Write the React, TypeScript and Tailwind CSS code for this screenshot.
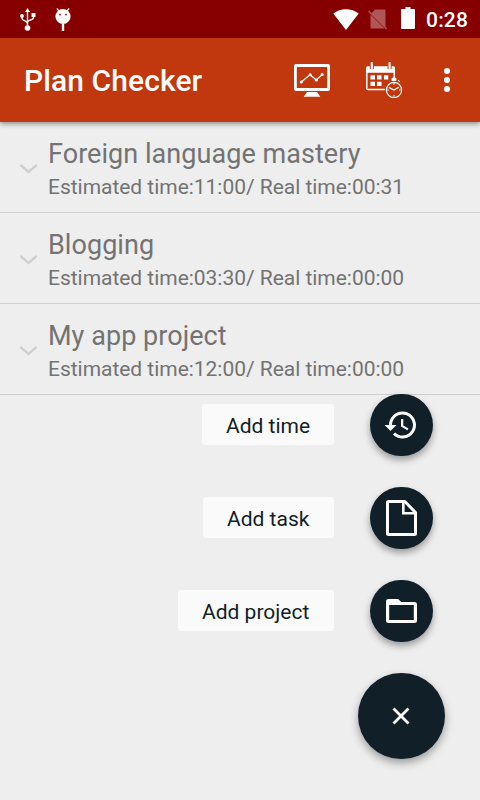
import React from 'react';

interface Project {
  name: string;
  estimated: string;
  real: string;
}

const projects: Project[] = [
  { name: 'Foreign language mastery', estimated: '11:00', real: '00:31' },
  { name: 'Blogging', estimated: '03:30', real: '00:00' },
  { name: 'My app project', estimated: '12:00', real: '00:00' },
];

const UsbIcon = () => (
  <svg className="w-4 h-[23px]" viewBox="0 0 16 23" fill="none" stroke="#fff" strokeWidth="1.4">
    <path d="M7.5 3v17M2 7v3.5c0 2 5.5 2.5 5.5 5M13.5 7v3c0 2-6 2-6 4" />
    <path d="M7.5 0L10 4H5z" fill="#fff" stroke="none" />
    <circle cx="7.5" cy="20" r="2.8" fill="#fff" stroke="none" />
    <circle cx="2" cy="8" r="1.9" fill="#fff" stroke="none" />
    <path d="M11.5 5h4v4h-4z" fill="#fff" stroke="none" />
  </svg>
);

const DebugIcon = () => (
  <svg className="w-4 h-[24px]" viewBox="0 0 16 24" fill="none">
    <path d="M1.8 1.5L4.5 4.500M14.200 1.500L11.500 4.500" stroke="#fff" strokeWidth="1.2" />
    <circle cx="8" cy="9.5" r="7.6" fill="#fff" />
    <path d="M6.8 17h2.400v7H6.800z" fill="#fff" />
    <circle cx="5" cy="7.6" r=".9" fill="#860000" />
    <circle cx="11" cy="7.6" r=".9" fill="#860000" />
  </svg>
);

const WifiIcon = () => (
  <svg className="w-[26px] h-[21px]" viewBox="0 0 26 21" fill="#fff">
    <path d="M13 21L.3 4.5C7.5-1.2 18.5-1.2 25.7 4.5z" />
  </svg>
);

const NoSimIcon = () => (
  <svg className="w-5 h-[21px]" viewBox="0 0 20 21">
    <path d="M7 .5h9.500a1 1 0 0 1 1 1v16.500L3.700 4.200zM2.500 5.500l14 14H3.500a1 1 0 0 1-1-1z" fill="#fff" fillOpacity=".34" />
    <path d="M.6 2l18 18" stroke="#fff" strokeOpacity=".32" strokeWidth="1.6" />
  </svg>
);

const BatteryIcon = () => (
  <svg className="w-[14px] h-[22px]" viewBox="0 0 14 22" fill="#fff">
    <path d="M4.5 0h5v2H13q1 0 1 1v18q0 1-1 1H1q-1 0-1-1V3q0-1 1-1h3.5z" />
  </svg>
);

const MonitorIcon = () => (
  <svg className="w-9 h-[33px]" viewBox="0 0 36 33" fill="none" stroke="#fff">
    <path fill="#fff" stroke="none" fillRule="evenodd" d="M2 0h32a2 2 0 0 1 2 2v23a2 2 0 0 1-2 2H2a2 2 0 0 1-2-2V2a2 2 0 0 1 2-2zM2.8 3v21h30.400V3z" />
    <path fill="#fff" stroke="none" d="M13 28h10l3.300 4.700H9.700z" />
    <path d="M7.300 18l8.700-7.200 6.300 5.200 6-5.500" strokeWidth="1.1" />
    <g fill="#fff" stroke="none">
      <circle cx="7.3" cy="18" r="1.6" />
      <circle cx="16.2" cy="10.8" r="1.5" />
      <circle cx="22.3" cy="16" r="1.6" />
      <circle cx="28.2" cy="10.5" r="1.5" />
    </g>
  </svg>
);

const CalendarIcon = () => (
  <svg className="w-[37px] h-9" viewBox="0 0 37 36" fill="none" stroke="#fff">
    <path d="M28.300 17V6.500q0-1.300-1.300-1.300h-25Q.8 5.200.8 6.500v19.700q0 1.300 1.300 1.300H19" strokeWidth="1.5" />
    <path d="M.2 10.800V5.500q0-1 1-1h26.700q1 0 1 1v5.300z" fill="#fff" stroke="none" />
    <path d="M5.800 0v7M23.600 0v7" stroke="#c1370e" strokeWidth="4" />
    <path d="M5.800 1v5.200M23.600 1v5.200" strokeWidth="2.2" strokeLinecap="round" />
    <path d="M4.500 13.300h4.500v4.200H4.500zM11 13.300h4.500v4.200H11zM18 13.300h4.300v4.200H18zM4.500 19.800h4.500V24H4.500zM11 19.800h4.500V24H11z" fill="#fff" stroke="none" />
    <circle cx="28" cy="28" r="9" fill="#c1370e" stroke="none" />
    <circle cx="28" cy="28" r="7.6" strokeWidth="1.2" />
    <path d="M26 16.500q2-1.500 4 0v2h-4zM32 18.300l2 1.500" fill="#fff" strokeWidth="1" />
    <path d="M22.800 25.300l5.200 2.700 4.800-2.700" strokeWidth="1.3" />
    <path d="M28 21v1.800M28 33v1.800M21.300 28h1.500M33.100 28h1.500" strokeWidth="1" />
  </svg>
);

const HistoryIcon = () => (
  <svg className="w-9 h-9" viewBox="0 0 24 24" fill="#fff">
    <path d="M13 3c-4.970 0-9 4.030-9 9H1l3.890 3.890.07.14L9 12H6c0-3.870 3.130-7 7-7s7 3.130 7 7-3.130 7-7 7c-1.930 0-3.680-.79-4.940-2.060l-1.420 1.420C8.270 19.990 10.510 21 13 21c4.970 0 9-4.030 9-9s-4.030-9-9-9zm-1 5v5l4.280 2.540.72-1.210-3.500-2.080V8H12z" />
  </svg>
);

const FileIcon = () => (
  <svg className="w-[31px] h-9" viewBox="0 0 31 36" fill="none" stroke="#fff" strokeWidth="3" strokeLinejoin="round">
    <path d="M2.500 1.500h16.300l10.700 11v21q0 1-1 1h-26q-1 0-1-1v-31q0-1 1-1z" />
    <path d="M17.300 1.400v11.800h12.300" strokeWidth="2.6" strokeLinejoin="miter" />
  </svg>
);

const FolderIcon = () => (
  <svg className="w-[31px] h-6" viewBox="0 0 31 24" fill="#fff">
    <path fillRule="evenodd" d="M2.500 0h9.700l3 3h13.300A2.500 2.500 0 0 1 31 5.500v16a2.500 2.500 0 0 1-2.500 2.500h-26A2.500 2.500 0 0 1 0 21.500v-19A2.500 2.500 0 0 1 2.500 0zM3.200 6v15h24.600V6z" />
  </svg>
);

const actions = [
  { label: 'Add time', icon: <HistoryIcon />, width: 'w-[132px]', nudge: 'pr-px' },
  { label: 'Add task', icon: <FileIcon />, width: 'w-[131px]', nudge: '' },
  { label: 'Add project', icon: <FolderIcon />, width: 'w-[156px]', nudge: '' },
];

const StatusBar: React.FC = () => (
  <div className="h-[38px] bg-[#860000] flex items-center justify-between pl-5 pr-3">
    <div className="flex items-center gap-[19px]">
      <UsbIcon />
      <DebugIcon />
    </div>
    <div className="flex items-center">
      <WifiIcon />
      <div className="ml-[9px] flex">
        <NoSimIcon />
      </div>
      <div className="ml-[13px] mb-0.5 flex">
        <BatteryIcon />
      </div>
      <span className="ml-[11px] mt-0.5 w-[42px] text-[21px] leading-6 font-medium tracking-[0.2px] whitespace-nowrap text-white">0:28</span>
    </div>
  </div>
);

const AppBar: React.FC = () => (
  <header className="relative h-[84px] bg-[#c1370e] flex items-center pl-6 pr-[30px] shadow-[0_2px_5px_rgba(0,0,0,0.4)]">
    <h1 className="flex-1 pt-0.5 text-[30px] leading-9 font-medium tracking-[0.1px] text-white">Plan Checker</h1>
    <MonitorIcon />
    <div className="ml-9">
      <CalendarIcon />
    </div>
    <div className="ml-[41px] flex flex-col gap-[3px]">
      <span className="size-1.5 rounded-full bg-white" />
      <span className="size-1.5 rounded-full bg-white" />
      <span className="size-1.5 rounded-full bg-white" />
    </div>
  </header>
);

const ProjectRow: React.FC<{ project: Project }> = ({ project }) => (
  <li className="h-[91px] flex items-center border-b border-[#cfcfcf] pl-5 text-[#737373]">
    <svg className="w-[17px] h-[10px] mt-[3px]" viewBox="0 0 17 10" fill="none" stroke="#cfcfcf" strokeWidth="2.4">
      <path d="M.3 1l8.200 7 8.200-7" />
    </svg>
    <div className="ml-[11px] pt-1">
      <div className="text-[27px] leading-8 tracking-[0.05px]">{project.name}</div>
      <div className="mt-[5px] text-[21px] leading-[25px] tracking-[-0.03px]">
        Estimated time:{project.estimated}/ Real time:{project.real}
      </div>
    </div>
  </li>
);

const App: React.FC = () => {
  return (
    <div className="w-[480px] h-[800px] overflow-hidden bg-[#eeeeee] font-[Roboto,sans-serif]">
      <StatusBar />
      <AppBar />
      <ul>
        {projects.map((project) => (
          <ProjectRow key={project.name} project={project} />
        ))}
      </ul>

      <div className="relative -mt-px flex flex-col items-end gap-[31px] pr-[35px]">
        {actions.map(({ label, icon, width, nudge }) => (
          <div key={label} className="flex items-center gap-9 pr-3">
            <span className={`${width} h-[41px] mb-px pl-6 rounded-[3px] bg-[#fafafa] text-[21px] leading-[45px] whitespace-nowrap text-[#101f28]`}>
              {label}
            </span>
            <button className={`${nudge} w-[63px] h-[62px] rounded-full bg-[#101f28] flex items-center justify-center shadow-[0_4px_7px_rgba(0,0,0,0.35)]`}>
              {icon}
            </button>
          </div>
        ))}
        <button className="w-[87px] h-[86px] pr-px rounded-full bg-[#101f28] flex items-center justify-center shadow-[0_4px_8px_rgba(0,0,0,0.35)]">
          <svg className="w-[18px] h-[18px]" viewBox="0 0 18 18" stroke="#fff" strokeWidth="2.8">
            <path d="M1.500 1.500l15 15M16.500 1.500l-15 15" />
          </svg>
        </button>
      </div>
    </div>
  );
};

export default App;
